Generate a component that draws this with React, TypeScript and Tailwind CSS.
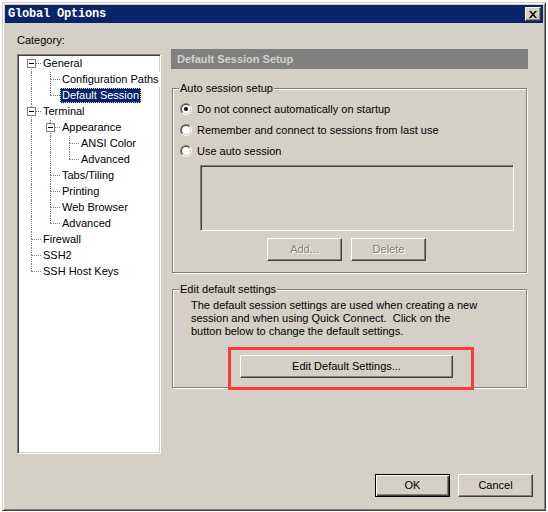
import React from 'react';

type Row = {
  label: string;
  lv: number;
  box?: boolean;
  first?: boolean;
  last: boolean;
  cont: boolean[];
  selected?: boolean;
};

const rows: Row[] = [
  { label: 'General', lv: 0, box: true, first: true, last: false, cont: [] },
  { label: 'Configuration Paths', lv: 1, last: false, cont: [true] },
  { label: 'Default Session', lv: 1, last: true, cont: [true], selected: true },
  { label: 'Terminal', lv: 0, box: true, last: false, cont: [] },
  { label: 'Appearance', lv: 1, box: true, last: false, cont: [true] },
  { label: 'ANSI Color', lv: 2, last: false, cont: [true, true] },
  { label: 'Advanced', lv: 2, last: true, cont: [true, true] },
  { label: 'Tabs/Tiling', lv: 1, last: false, cont: [true] },
  { label: 'Printing', lv: 1, last: false, cont: [true] },
  { label: 'Web Browser', lv: 1, last: false, cont: [true] },
  { label: 'Advanced', lv: 1, last: true, cont: [true] },
  { label: 'Firewall', lv: 0, last: false, cont: [] },
  { label: 'SSH2', lv: 0, last: false, cont: [] },
  { label: 'SSH Host Keys', lv: 0, last: true, cont: [] },
];

function TreeRow({ row }: { row: Row }) {
  return (
    <div className="flex h-[16px] items-start">
      {/* ancestor columns */}
      {row.cont.map((c, i) => (
        <div key={i} className="relative h-[16px] w-[19px] shrink-0">
          {c && <div className="absolute left-[12px] top-0 h-[16px] border-l border-dotted border-[#808080]" />}
        </div>
      ))}
      {/* own column */}
      <div className="relative h-[16px] w-[19px] shrink-0">
        {!row.first && <div className="absolute left-[12px] top-0 h-[7px] border-l border-dotted border-[#808080]" />}
        {!row.last && <div className="absolute left-[12px] top-[7px] h-[9px] border-l border-dotted border-[#808080]" />}
        <div className="absolute left-[12px] top-[7px] w-[10px] border-t border-dotted border-[#808080]" />
        {row.box && (
          <div className="absolute left-[8px] top-[3px] h-[9px] w-[9px] border border-[#808080] bg-white">
            <div className="absolute left-[1px] top-[3px] h-[1px] w-[5px] bg-black" />
          </div>
        )}
      </div>
      <span
        className={
          'relative ml-[3px] h-[15px] whitespace-nowrap px-[2px] leading-[15px] ' +
          (row.selected
            ? 'bg-[#0a246a] text-white outline-1 -outline-offset-1 outline-dotted outline-[#d8d48c]'
            : 'bg-white')
        }
      >
        {row.label}
      </span>
    </div>
  );
}

function Radio({ checked, label }: { checked?: boolean; label: string }) {
  return (
    <div className="flex h-[20px] items-center gap-[5px]">
      <div className="h-[12px] w-[12px] shrink-0 rounded-full border border-t-[#808080] border-l-[#808080] border-r-white border-b-white">
        <div className="flex h-[10px] w-[10px] items-center justify-center rounded-full border border-t-[#404040] border-l-[#404040] border-r-[#d4d0c8] border-b-[#d4d0c8] bg-white">
          {checked && <div className="h-[4px] w-[4px] rounded-full bg-black" />}
        </div>
      </div>
      <span className="whitespace-nowrap leading-[13px]">{label}</span>
    </div>
  );
}

function Button({
  children,
  className = '',
  disabled,
  isDefault,
}: {
  children: React.ReactNode;
  className?: string;
  disabled?: boolean;
  isDefault?: boolean;
}) {
  const frame = isDefault
    ? 'border border-black shadow-[inset_1px_1px_0_#fff,inset_-1px_-1px_0_#404040,inset_-2px_-2px_0_#808080]'
    : 'border border-t-white border-l-white border-r-[#404040] border-b-[#404040] shadow-[inset_-1px_-1px_0_#808080]';
  return (
    <div
      className={
        'flex h-[23px] items-center justify-center bg-[#d4d0c8] leading-[13px] ' +
        frame +
        ' ' +
        (disabled ? 'text-[#808080] [text-shadow:1px_1px_0_#fff] ' : 'text-black ') +
        className
      }
    >
      {children}
    </div>
  );
}

function Group({
  legend,
  className = '',
  children,
}: {
  legend: string;
  className?: string;
  children: React.ReactNode;
}) {
  return (
    <div
      className={
        'relative ml-[1px] w-[355px] border border-[#808080] shadow-[inset_1px_1px_0_#fff,1px_1px_0_#fff] ' + className
      }
    >
      <span className="absolute -top-[7px] left-[6px] bg-[#d4d0c8] px-[1px] leading-[13px]">{legend}</span>
      {children}
    </div>
  );
}

export default function App() {
  return (
    <div className="h-[512px] w-[548px] overflow-hidden bg-white pl-[2px] pt-[2px]">
      <div className="flex h-[509px] w-[544px] flex-col border border-t-[#d4d0c8] border-l-[#d4d0c8] border-r-[#404040] border-b-[#404040] bg-[#d4d0c8] p-[2px] shadow-[inset_1px_1px_0_#fff,inset_-1px_-1px_0_#808080]">
        {/* Title bar */}
        <div className="flex h-[18px] shrink-0 items-center justify-between bg-[#0a246a] pl-[3px] pr-[2px]">
          <span className="font-['Liberation_Mono','Courier_New',monospace] text-[12px] font-bold leading-[14px] tracking-[-0.2px] text-white">
            Global Options
          </span>
          <div className="flex h-[14px] w-[16px] items-center justify-center border border-t-white border-l-white border-r-[#404040] border-b-[#404040] bg-[#d4d0c8] shadow-[inset_-1px_-1px_0_#808080]">
            <svg width="8" height="7" viewBox="0 0 8 7">
              <path d="M0 0h2l2 2.5L6 0h2L5 3.5 8 7H6L4 4.5 2 7H0l3-3.5z" fill="#000" />
            </svg>
          </div>
        </div>

        {/* Body */}
        <div className="flex flex-1 flex-col pl-[12px] pr-[10px] pt-[11px] font-['Liberation_Sans',Arial,sans-serif] text-[11px] text-black">
          <div className="flex items-start gap-[10px]">
            {/* Category */}
            <div className="w-[144px] shrink-0">
              <div className="mb-[7px] h-[13px] leading-[13px]">Category:</div>
              <div className="h-[400px] w-[144px] overflow-hidden border border-t-[#808080] border-l-[#808080] border-r-white border-b-white bg-white p-[1px] shadow-[inset_1px_1px_0_#404040,inset_-1px_-1px_0_#d4d0c8]">
                {rows.map((r, i) => (
                  <TreeRow key={i} row={r} />
                ))}
              </div>
            </div>

            {/* Page */}
            <div className="w-[357px] pt-[15px]">
              <div className="h-[20px] bg-[#808080] pl-[6px] font-bold leading-[20px] text-[#d4d0c8]">
                Default Session Setup
              </div>

              <Group legend="Auto session setup" className="mt-[19px] h-[185px] pl-[7px] pt-[10px]">
                <div className="flex flex-col gap-[1px]">
                  <Radio checked label="Do not connect automatically on startup" />
                  <Radio label="Remember and connect to sessions from last use" />
                  <Radio label="Use auto session" />
                </div>
                <div className="ml-[20px] mt-[4px] h-[66px] w-[314px] border border-t-[#808080] border-l-[#808080] border-r-white border-b-white bg-[#d4d0c8] shadow-[inset_1px_1px_0_#404040,inset_-1px_-1px_0_#d4d0c8]" />
                <div className="ml-[87px] mt-[7px] flex gap-[9px]">
                  <Button disabled className="w-[75px]">
                    Add...
                  </Button>
                  <Button disabled className="w-[75px]">
                    Delete
                  </Button>
                </div>
              </Group>

              <Group legend="Edit default settings" className="mt-[16px] h-[99px] pl-[18px] pt-[9px]">
                <p className="whitespace-nowrap leading-[13px]">
                  The default session settings are used when creating a new
                  <br />
                  session and when using Quick Connect.&nbsp; Click on the
                  <br />
                  button below to change the default settings.
                </p>
                <Button className="ml-[49px] mt-[17px] w-[213px]">Edit Default Settings...</Button>
                <div className="absolute left-[55px] top-[57px] h-[43px] w-[246px] border-[3px] border-[#fb3a3a]" />
              </Group>
            </div>
          </div>

          {/* Footer */}
          <div className="mt-[20px] flex justify-end gap-[8px]">
            <Button isDefault className="w-[75px]">
              OK
            </Button>
            <Button className="w-[75px]">Cancel</Button>
          </div>
        </div>
      </div>
    </div>
  );
}
